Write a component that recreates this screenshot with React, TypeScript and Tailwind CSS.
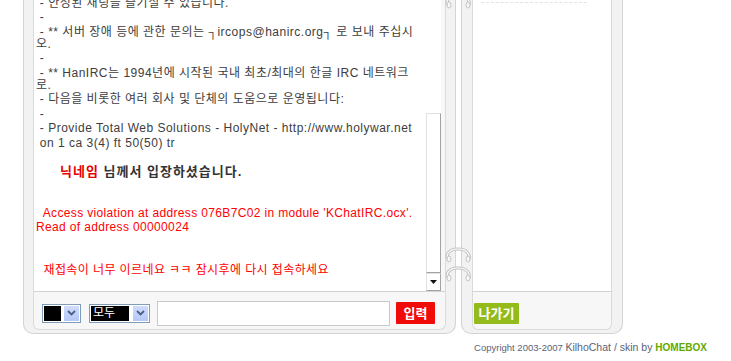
import React from 'react';

// MOTD lines, each entry is one message; extra items are the wrapped continuation
const motd: string[][] = [
  [' - 이용해 주셔서 감사합니다.'],
  [' - 안정된 채팅을 즐기실 수 있습니다.'],
  [' -'],
  [' - ** 서버 장애 등에 관한 문의는 ┐ircops@hanirc.org┐ 로 보내 주십시', '오.'],
  [' -'],
  [' - ** HanIRC는 1994년에 시작된 국내 최초/최대의 한글 IRC 네트워크', '로.'],
  [' - 다음을 비롯한 여러 회사 및 단체의 도움으로 운영됩니다:'],
  [' -'],
  [' - Provide Total Web Solutions - HolyNet - http://www.holywar.net'],
  [' on 1 ca 3(4) ft 50(50) tr'],
];

const Chevron = () => (
  <svg width="9" height="6" viewBox="0 0 9 6">
    <path d="M1 1 L4.5 4.5 L8 1" fill="none" stroke="#4a5f86" strokeWidth="1.8" />
  </svg>
);

const DropButton = () => (
  <div className="flex h-full w-[15px] items-center justify-center bg-gradient-to-b from-[#d0dcfc] to-[#b5c8f6]">
    <Chevron />
  </div>
);

const Ring = ({ className }: { className: string }) => (
  <svg width="28" height="16" viewBox="0 0 28 16" className={className}>
    <path d="M5 12 C1.5 12 2 2 14 2 C26 2 26.5 12 24 12" fill="none" stroke="#c2c2c2" strokeWidth="3.2" />
    <path d="M5 12 C1.5 12 2 2 14 2 C26 2 26.5 12 24 12" fill="none" stroke="#ffffff" strokeWidth="1.2" />
    <ellipse cx="5" cy="12" rx="2" ry="3" fill="#f7f7f7" stroke="#bdbdbd" strokeWidth="0.9" />
    <ellipse cx="24" cy="12" rx="2" ry="3" fill="#f7f7f7" stroke="#bdbdbd" strokeWidth="0.9" />
  </svg>
);

function Scrollbar() {
  return (
    <div className="flex w-[15px] flex-col bg-white">
      <div className="flex-1" />
      <div className="h-[160px] border border-[#e2e2e2] border-r-[#a3a3a3] border-b-[#a3a3a3] bg-white" />
      <div className="flex h-[18px] items-center justify-center border border-[#e2e2e2] border-r-[#a3a3a3] border-b-[#a3a3a3] bg-white">
        <svg width="7" height="4" viewBox="0 0 7 4">
          <path d="M0 0 H7 L3.5 4 Z" fill="#111" />
        </svg>
      </div>
    </div>
  );
}

function ChatPanel() {
  return (
    <section className="w-[433px] rounded-b-[10px] border border-t-0 border-[#d4d4d4] bg-[#f2f2f2] px-[9px] pb-[3px]">
      <div className="rounded-b-[6px] border border-t-0 border-[#dadada] bg-[#f7f7f7]">
        <div className="flex h-[292px] border-b border-[#d3d3d3]">
          <div className="flex w-[392px] flex-col justify-end overflow-hidden bg-white pb-[14px] pl-[2px] text-[12px] tracking-[0.5px] text-[#3d3d3d]">
            {motd.map((lines, i) => (
              <div key={i} className="whitespace-pre py-[1.25px] leading-[12px]">
                {lines.map((l, j) => (
                  <div key={j}>{l}</div>
                ))}
              </div>
            ))}
            <div className="mt-[14px] ml-[24px] text-[13px] font-bold leading-[16px] tracking-[1px] text-[#333]">
              <span className="text-[#e60000]">닉네임</span> 님께서 입장하셨습니다.
            </div>
            <div className="mt-[26px] whitespace-pre leading-[14px] tracking-[0.35px] text-[#ff0000]">
              <div>{'  Access violation at address 076B7C02 in module \'KChatIRC.ocx\'.'}</div>
              <div>Read of address 00000024</div>
            </div>
            <div className="mt-[29px] whitespace-pre leading-[14px] tracking-[0.4px] text-[#ff0000]">
              {'  재접속이 너무 이르네요 ㅋㅋ 잠시후에 다시 접속하세요'}
            </div>
          </div>
          <Scrollbar />
        </div>
        <div className="flex h-[37px] items-center pl-[8px] pt-[5px]">
          <div className="flex h-[19px] w-[39px] gap-[3px] border border-[#7f9db9] bg-white p-[1px]">
            <div className="w-[17px] bg-black" />
            <div className="ml-auto">
              <DropButton />
            </div>
          </div>
          <div className="ml-[8px] flex h-[19px] w-[61px] gap-[3px] border border-[#7f9db9] bg-white p-[1px]">
            <div className="flex w-[38px] items-center bg-black pl-[2px] text-[12px] leading-[12px] text-white">모두</div>
            <div className="ml-auto">
              <DropButton />
            </div>
          </div>
          <input
            className="ml-[7px] h-[25px] w-[233px] border border-[#c9c9c9] bg-white outline-none"
            defaultValue=""
          />
          <button className="ml-[6px] flex h-[22px] w-[39px] items-center justify-center rounded-[1px] bg-[#f00a0a] text-[13px] font-bold leading-none text-white">
            입력
          </button>
        </div>
      </div>
    </section>
  );
}

function UserPanel() {
  return (
    <section className="w-[162px] rounded-b-[10px] border border-t-0 border-[#d4d4d4] bg-[#f2f2f2] px-[10px] pb-[3px]">
      <div className="rounded-b-[6px] border border-t-0 border-[#dadada] bg-[#f7f7f7]">
        <div className="h-[292px] border-b border-[#d3d3d3] bg-white pl-[8px] pr-[24px] pt-[2px]">
          <div className="border-b border-dashed border-[#e3e3e3]" />
        </div>
        <div className="flex h-[37px] items-center pl-[1px] pt-[5px]">
          <button className="flex h-[21px] w-[45px] items-center justify-center rounded-[1px] bg-[#93bb1b] text-[13px] font-bold leading-none text-white">
            나가기
          </button>
        </div>
      </div>
    </section>
  );
}

export default function App() {
  return (
    <div className="h-[361px] w-[731px] overflow-hidden bg-white font-['Liberation_Sans','Noto_Sans_CJK_KR',sans-serif]">
      <div className="relative ml-[23px] flex items-start gap-[5px]">
        <ChatPanel />
        <UserPanel />
        <Ring className="absolute left-[421px] top-[-7px]" />
        <Ring className="absolute left-[421px] top-[247px]" />
        <Ring className="absolute left-[421px] top-[266px]" />
      </div>
      <div className="mt-[5px] w-[707px] text-right leading-[14px] text-[#5b6275]">
        <span className="text-[9.5px]">Copyright 2003-2007 </span>
        <span className="text-[10.5px]">KilhoChat / skin by </span>
        <span className="text-[10px] font-bold text-[#5faa00]">HOMEBOX</span>
      </div>
    </div>
  );
}
